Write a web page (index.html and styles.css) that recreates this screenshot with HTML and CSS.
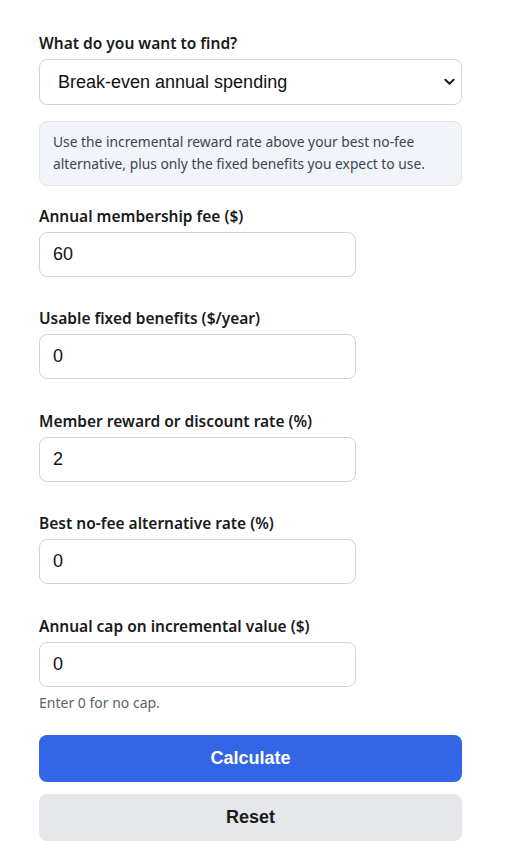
FILE: index.html
```html
<!DOCTYPE html>
<html lang="en">
<head>
    <meta charset="UTF-8">
    <meta name="viewport" content="width=device-width, initial-scale=1.0">
    <title>Membership Fee Calculator</title>
    <link rel="stylesheet" href="styles.css">
</head>
<body>
    <form class="calc">
        <div class="field">
            <label for="mode">What do you want to find?</label>
            <div class="select-wrap">
                <select id="mode">
                    <option>Break-even annual spending</option>
                </select>
                <svg class="chevron" viewBox="0 0 12 8" width="11" height="8">
                    <path d="M1.5 1.5 L6 6 L10.5 1.5" fill="none" stroke="#222" stroke-width="2.2" stroke-linecap="round" stroke-linejoin="round"/>
                </svg>
            </div>
        </div>

        <div class="note">
            Use the incremental reward rate above your best no-fee alternative, plus only the fixed benefits you expect to use.
        </div>

        <div class="field">
            <label for="fee">Annual membership fee ($)</label>
            <input type="text" id="fee" value="60">
        </div>

        <div class="field">
            <label for="benefits">Usable fixed benefits ($/year)</label>
            <input type="text" id="benefits" value="0">
        </div>

        <div class="field">
            <label for="rate">Member reward or discount rate (%)</label>
            <input type="text" id="rate" value="2">
        </div>

        <div class="field">
            <label for="alt">Best no-fee alternative rate (%)</label>
            <input type="text" id="alt" value="0">
        </div>

        <div class="field last">
            <label for="cap">Annual cap on incremental value ($)</label>
            <input type="text" id="cap" value="0">
            <p class="hint">Enter 0 for no cap.</p>
        </div>

        <div class="actions">
            <button type="button" class="btn primary">Calculate</button>
            <button type="reset" class="btn secondary">Reset</button>
        </div>
    </form>
</body>
</html>
```

FILE: styles.css
```css
* {
    margin: 0;
    padding: 0;
    box-sizing: border-box;
}

body {
    background: #fff;
    color: #1a1a1a;
    font-family: 'Noto Sans', 'Open Sans', sans-serif;
}

.calc {
    width: 423px;
    margin-left: 39px;
    padding-top: 31px;
    display: flex;
    flex-direction: column;
}

.field {
    display: flex;
    flex-direction: column;
    align-items: flex-start;
    margin-bottom: 29.5px;
}

.field.last {
    margin-bottom: 23px;
}

label {
    font-size: 15.5px;
    font-weight: 600;
    line-height: 24px;
    color: #1a1a1a;
    margin-bottom: 4px;
}

.select-wrap {
    position: relative;
    width: 100%;
}

select {
    appearance: none;
    width: 100%;
    height: 46px;
    padding: 0 40px 0 18px;
    font-family: 'Liberation Sans', Arial, sans-serif;
    font-size: 18px;
    color: #111;
    background: #fff;
    border: 1px solid #cfd3dc;
    border-radius: 8px;
}

.chevron {
    position: absolute;
    right: 7px;
    top: 19px;
    pointer-events: none;
}

.note {
    margin: -14px 0 18px;
    padding: 9.5px 13px;
    background: #f1f4f9;
    border: 1px solid #e0e5ed;
    border-radius: 8px;
    font-size: 13.8px;
    line-height: 22px;
    color: #3d4451;
}

input {
    width: 317px;
    height: 45px;
    padding: 0 13px;
    font-family: 'Liberation Sans', Arial, sans-serif;
    font-size: 18px;
    color: #111;
    border: 1px solid #cfd3dc;
    border-radius: 8px;
    background: #fff;
}

.hint {
    margin-top: 7px;
    font-size: 14px;
    line-height: 18px;
    color: #5b6270;
}

.actions {
    display: flex;
    flex-direction: column;
    gap: 12px;
}

.btn {
    width: 100%;
    height: 47px;
    border: none;
    border-radius: 8px;
    font-family: 'Liberation Sans', Arial, sans-serif;
    font-size: 18px;
    font-weight: 700;
    cursor: pointer;
}

.btn.primary {
    background: #3366e6;
    color: #fff;
}

.btn.secondary {
    background: #e5e7eb;
    color: #1a1a1a;
}
```
